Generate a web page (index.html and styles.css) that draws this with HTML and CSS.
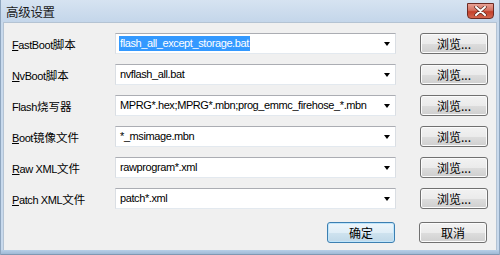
FILE: index.html
```html
<!DOCTYPE html>
<html>
<head>
<meta charset="utf-8">
<link rel="stylesheet" href="styles.css">
</head>
<body>
<div class="window">
  <div class="titlebar">
    <span class="title">高级设置</span>
    <span class="close">
      <svg width="13" height="10" viewBox="0 0 13 10">
        <path d="M2 1 L11 9 M11 1 L2 9" stroke="#5a2a22" stroke-width="3.4" stroke-linecap="round"/>
        <path d="M2 1 L11 9 M11 1 L2 9" stroke="#ffffff" stroke-width="2" stroke-linecap="round"/>
      </svg>
    </span>
  </div>
  <div class="client">
    <div class="rows">
      <div class="row">
        <label class="lbl"><u>F</u>astBoot<span class="cjk">脚本</span></label>
        <div class="combo"><span class="val sel">flash_all_except_storage.bat</span><span class="arrow"></span></div>
        <button class="btn">浏览...</button>
      </div>
      <div class="row">
        <label class="lbl"><u>N</u>vBoot<span class="cjk">脚本</span></label>
        <div class="combo"><span class="val">nvflash_all.bat</span><span class="arrow"></span></div>
        <button class="btn">浏览...</button>
      </div>
      <div class="row">
        <label class="lbl">Flash<span class="cjk">烧写器</span></label>
        <div class="combo"><span class="val">MPRG*.hex;MPRG*.mbn;prog_emmc_firehose_*.mbn</span><span class="arrow"></span></div>
        <button class="btn">浏览...</button>
      </div>
      <div class="row">
        <label class="lbl"><u>B</u>oot<span class="cjk">镜像文件</span></label>
        <div class="combo"><span class="val">*_msimage.mbn</span><span class="arrow"></span></div>
        <button class="btn">浏览...</button>
      </div>
      <div class="row">
        <label class="lbl"><u>R</u>aw XML<span class="cjk">文件</span></label>
        <div class="combo"><span class="val">rawprogram*.xml</span><span class="arrow"></span></div>
        <button class="btn">浏览...</button>
      </div>
      <div class="row">
        <label class="lbl"><u>P</u>atch XML<span class="cjk">文件</span></label>
        <div class="combo"><span class="val">patch*.xml</span><span class="arrow"></span></div>
        <button class="btn">浏览...</button>
      </div>
    </div>
    <div class="actions">
      <button class="btn default">确定</button>
      <button class="btn">取消</button>
    </div>
  </div>
  <div class="bottomframe"></div>
</div>
</body>
</html>
```

FILE: styles.css
```css
html, body {
  margin: 0;
  padding: 0;
}
body {
  width: 500px;
  height: 255px;
  overflow: hidden;
  font-family: "Liberation Sans", "Noto Sans CJK SC", sans-serif;
  font-size: 11px;
  letter-spacing: -0.4px;
  color: #000;
}
.cjk {
  font-family: "Noto Sans CJK SC", sans-serif;
  font-size: 11.5px;
  letter-spacing: 0;
}
.window {
  width: 500px;
  height: 255px;
  display: flex;
  flex-direction: column;
  background: #c8d9ec;
  box-sizing: border-box;
  border-left: 1px solid #8fa6bf;
  border-right: 1px solid #8fa6bf;
}
.titlebar {
  height: 22px;
  flex: none;
  display: flex;
  align-items: center;
  justify-content: space-between;
  padding: 0 5px 0 5px;
  background: linear-gradient(#d6e3f1, #c4d6ea);
}
.title {
  font-family: "Noto Sans CJK SC", sans-serif;
  font-size: 12.5px;
  color: #1b1b1b;
  letter-spacing: -0.3px;
  margin-top: 1px;
}
.close {
  width: 27px;
  height: 16px;
  margin-top: -1px;
  box-sizing: border-box;
  border: 1px solid #6d2b24;
  border-radius: 0 0 4px 4px;
  background: linear-gradient(#e8a195 0%, #d4705f 45%, #c4402b 55%, #d2664f 100%);
  display: flex;
  align-items: center;
  justify-content: center;
}
.close svg { display: block; }
.client {
  flex: 1;
  margin: 0 2px;
  background: #f0f0f0;
  border: 1px solid #b4c3d3;
  border-bottom: none;
  padding: 10px 9px 0 8px;
  display: flex;
  flex-direction: column;
}
.rows {
  display: flex;
  flex-direction: column;
  gap: 10px;
}
.row {
  display: flex;
  align-items: center;
  height: 21px;
}
.lbl {
  width: 103px;
  flex: none;
  white-space: nowrap;
  color: #000;
}
.lbl u { text-decoration: underline; text-underline-offset: 1px; }
.combo {
  width: 281px;
  height: 21px;
  flex: none;
  box-sizing: border-box;
  background: #fff;
  border: 1px solid #abadb3;
  border-left-color: #dadee3;
  border-right-color: #dadee3;
  border-bottom-color: #e3e9ef;
  display: flex;
  align-items: center;
  padding-left: 3px;
  position: relative;
}
.val {
  flex: 1;
  white-space: nowrap;
  overflow: hidden;
  line-height: 15px;
  padding: 0 1px;
}
.val.sel {
  flex: none;
  background: #3399ff;
  color: #fff;
}
.arrow {
  width: 0;
  height: 0;
  border-left: 3.5px solid transparent;
  border-right: 3.5px solid transparent;
  border-top: 4px solid #000;
  margin: 0 5px 0 auto;
  flex: none;
}
.btn {
  width: 68px;
  height: 21px;
  flex: none;
  margin-left: 24px;
  box-sizing: border-box;
  border: 1px solid #707070;
  border-radius: 3px;
  background: linear-gradient(#f2f2f2 0%, #ebebeb 50%, #dddddd 51%, #cfcfcf 100%);
  box-shadow: inset 0 0 0 1px #fbfbfb;
  font-family: "Noto Sans CJK SC", sans-serif;
  font-size: 12px;
  letter-spacing: 0;
  color: #000;
  padding: 0;
  line-height: 19px;
}
.actions {
  display: flex;
  justify-content: flex-end;
  margin-top: 13px;
}
.btn.default {
  border-color: #3c7fb1;
  box-shadow: inset 0 0 0 1px #bfe5fb;
  background: linear-gradient(#eef6fb 0%, #e0eef7 50%, #cfe3ef 51%, #c0d8e8 100%);
}
.bottomframe {
  height: 4px;
  flex: none;
  background: linear-gradient(#b7cfe8, #9fbad6);
  border-bottom: 1px solid #7f98b3;
}
```
